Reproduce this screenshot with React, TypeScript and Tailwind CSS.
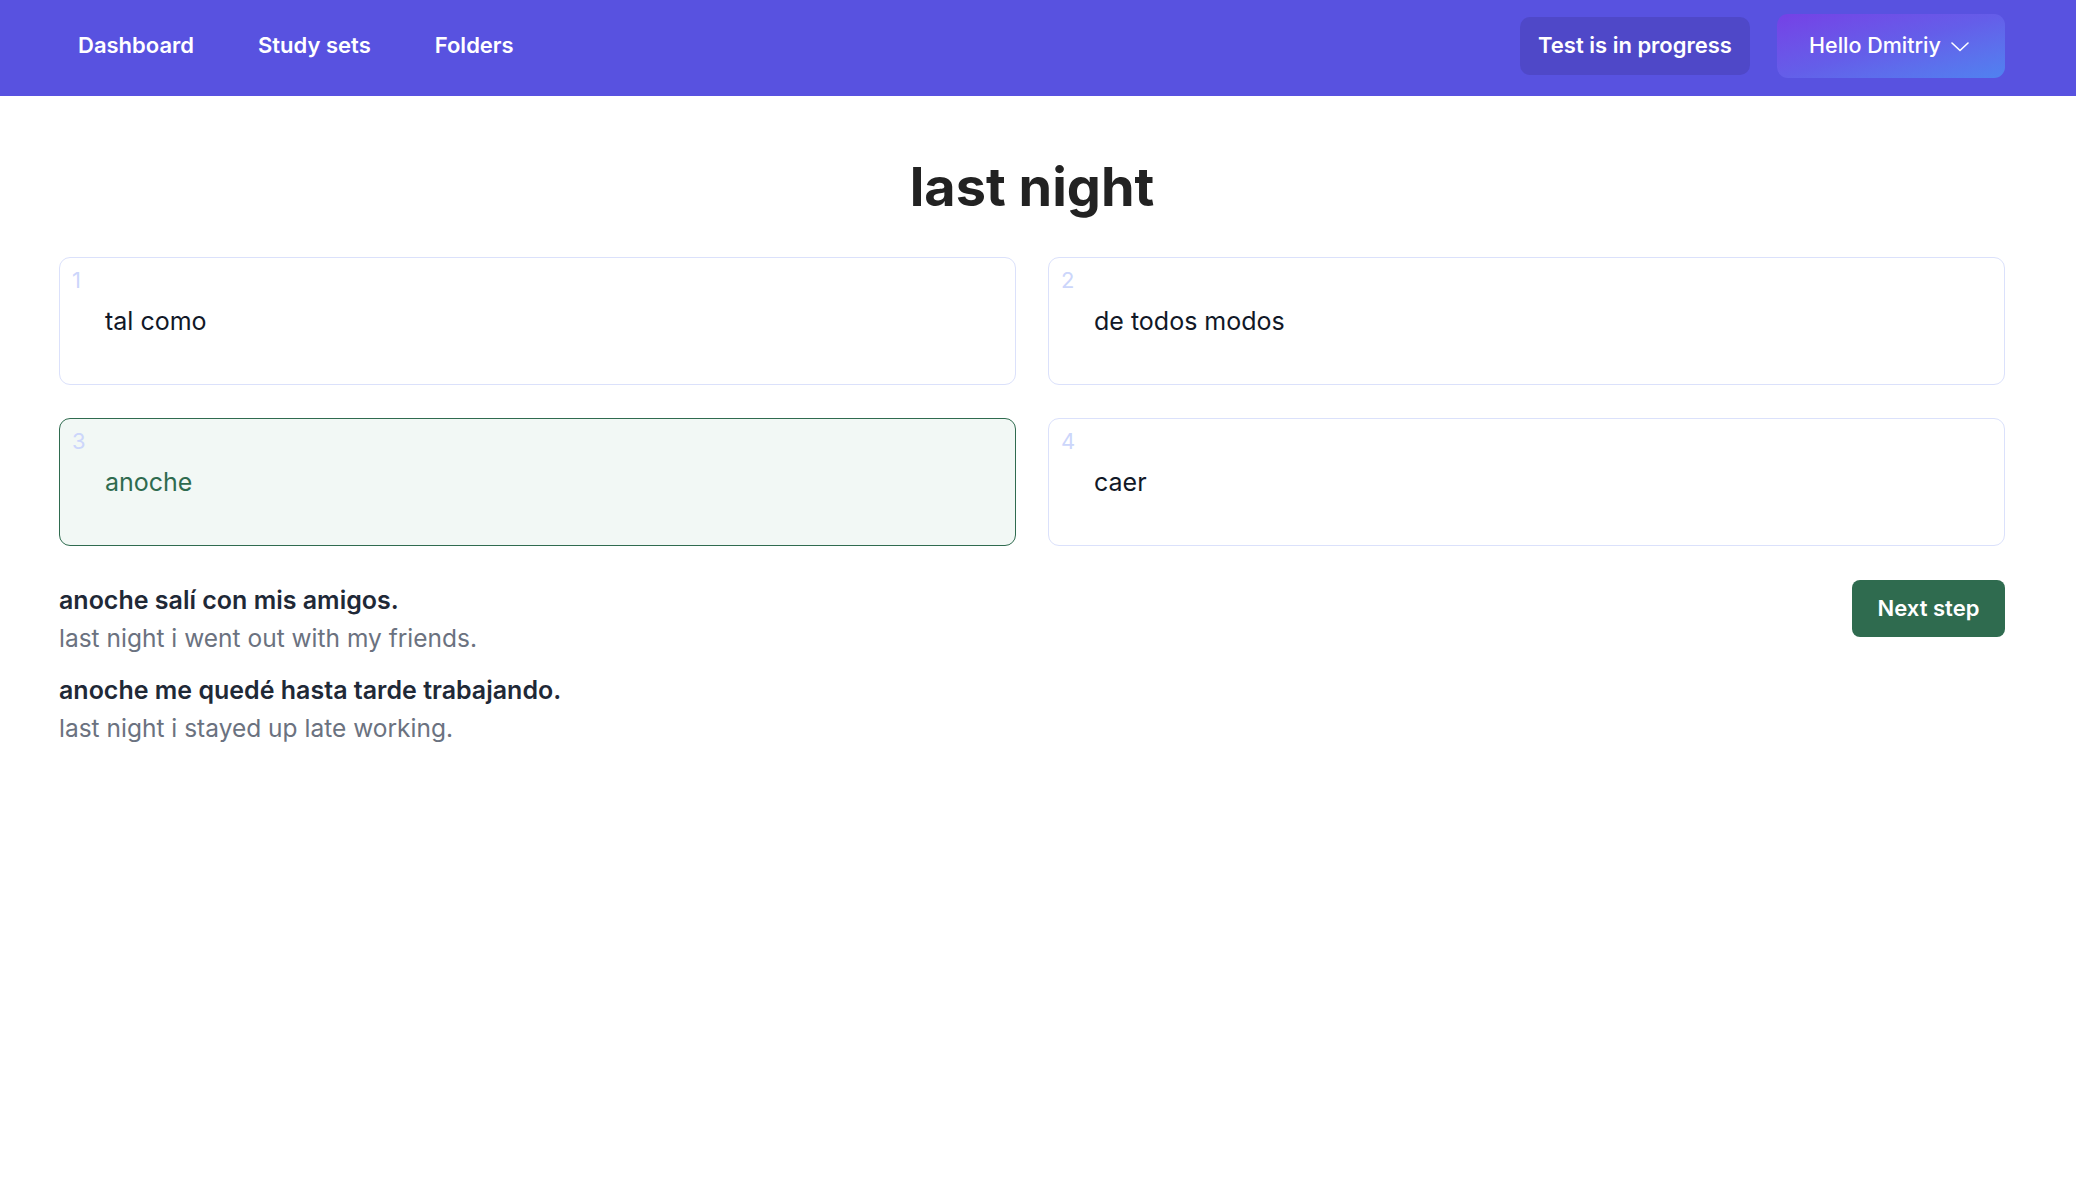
const cards = [
  { n: 1, text: 'tal como', correct: false },
  { n: 2, text: 'de todos modos', correct: false },
  { n: 3, text: 'anoche', correct: true },
  { n: 4, text: 'caer', correct: false },
]

const examples = [
  { es: 'anoche salí con mis amigos.', en: 'last night i went out with my friends.' },
  { es: 'anoche me quedé hasta tarde trabajando.', en: 'last night i stayed up late working.' },
]

const ChevronDown = () => (
  <svg width="18" height="10" viewBox="0 0 18 10" fill="none" className="ml-[10px] mt-[2px]">
    <polyline points="1,1 9,8.5 17,1" stroke="white" strokeWidth="1.6" strokeLinecap="round" strokeLinejoin="round" />
  </svg>
)

const App = () => {
  return (
    <div className="min-h-screen bg-white font-['Inter',sans-serif] text-[#111827]">
      <header className="h-[96px] pb-[5px] bg-[#5852e0] flex items-center justify-between pl-[46px] pr-[71px]">
        <nav className="flex items-center">
          {['Dashboard', 'Study sets', 'Folders'].map((item) => (
            <a key={item} className="px-[32px] text-[22px] font-semibold text-white cursor-pointer">
              {item}
            </a>
          ))}
        </nav>
        <div className="flex items-center gap-[27px]">
          <button className="h-[58px] w-[230px] rounded-[10px] bg-[#4f48c8] text-white text-[22px] font-semibold">
            Test is in progress
          </button>
          <button className="h-[64px] w-[228px] pl-[32px] rounded-[11px] bg-linear-to-br from-[#7540e6] via-[#645ee9] to-[#4f82f0] text-white text-[21.5px] font-medium flex items-center">
            Hello Dmitriy
            <ChevronDown />
          </button>
        </div>
      </header>

      <main className="pl-[59px] pr-[71px]">
        <h1 className="pt-[59px] mb-[38px] text-center text-[54px] leading-[64px] font-bold text-[#222222]">last night</h1>

        <div className="grid grid-cols-2 gap-x-[32px] gap-y-[33px]">
          {cards.map((c) => (
            <div
              key={c.n}
              className={
                c.correct
                  ? 'relative h-[128px] rounded-[11px] border border-[#2f6b4f] bg-[#f2f8f5] flex items-center pl-[45px]'
                  : 'relative h-[128px] rounded-[11px] border border-[#dbe1fb] bg-white flex items-center pl-[45px]'
              }
            >
              <span className="absolute top-[8px] left-[12px] text-[22px] leading-[28px] text-[#ccd6fb]">{c.n}</span>
              <span className={c.correct ? 'mt-[2px] text-[25px] text-[#2f6b4f]' : 'mt-[2px] text-[25px] text-[#111827]'}>{c.text}</span>
            </div>
          ))}
        </div>

        <div className="mt-[33px] flex items-start justify-between">
          <div className="pt-[2px] flex flex-col gap-[14px]">
            {examples.map((e) => (
              <div key={e.es} className="flex flex-col">
                <p className="text-[25px] leading-[38px] font-semibold text-[#1f2937]">{e.es}</p>
                <p className="text-[24.5px] leading-[38px] text-[#6b7280]">{e.en}</p>
              </div>
            ))}
          </div>
          <button className="h-[57px] w-[153px] mt-[1px] rounded-[8px] bg-[#2f6b4f] text-white text-[22px] font-semibold">
            Next step
          </button>
        </div>
      </main>
    </div>
  )
}

export default App
